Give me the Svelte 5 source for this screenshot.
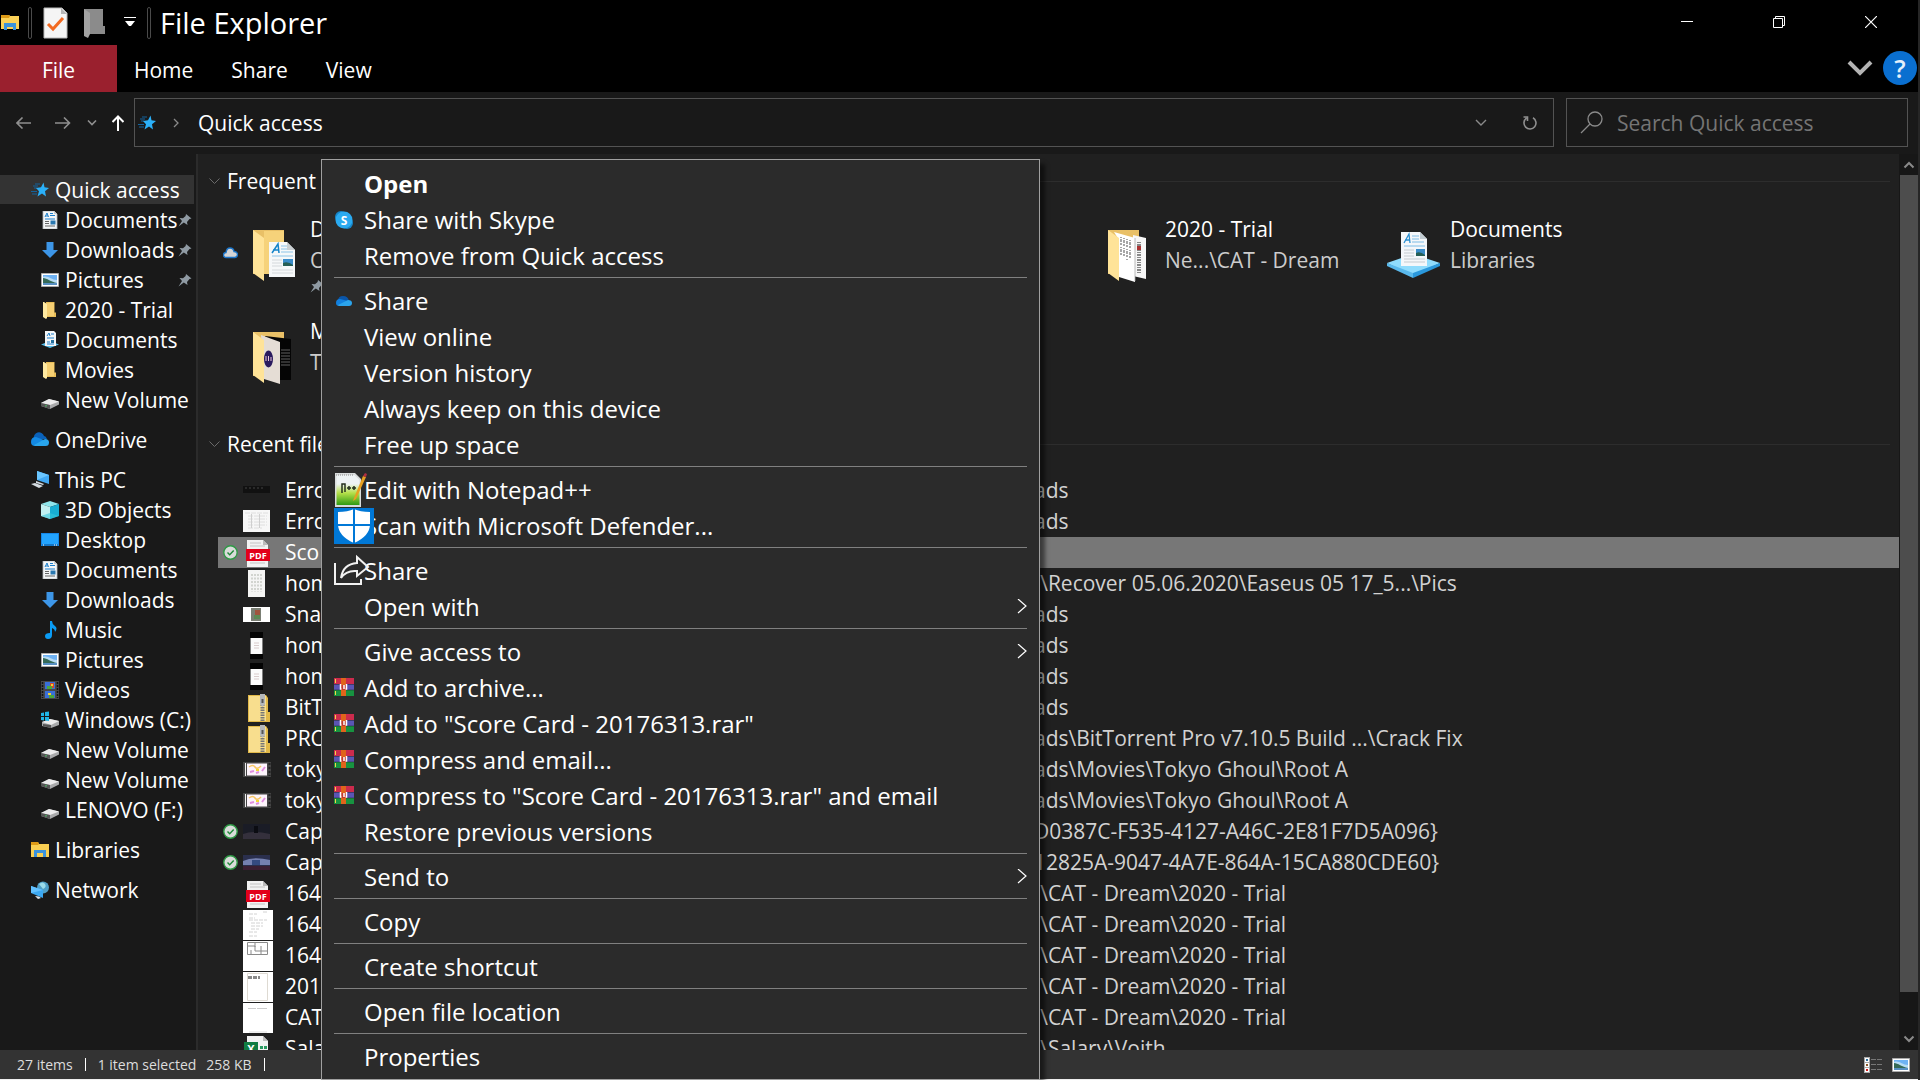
<script>
  const navGroups = [
    [
      { label: 'Quick access', icon: 'star', root: true, active: true },
      { label: 'Documents', icon: 'doc', pinned: true },
      { label: 'Downloads', icon: 'down', pinned: true },
      { label: 'Pictures', icon: 'pic', pinned: true },
      { label: '2020 - Trial', icon: 'folder' },
      { label: 'Documents', icon: 'libdoc' },
      { label: 'Movies', icon: 'folder' },
      { label: 'New Volume', icon: 'drive' }
    ],
    [{ label: 'OneDrive', icon: 'onedrive', root: true }],
    [
      { label: 'This PC', icon: 'pc', root: true },
      { label: '3D Objects', icon: 'cube' },
      { label: 'Desktop', icon: 'desktop' },
      { label: 'Documents', icon: 'doc' },
      { label: 'Downloads', icon: 'down' },
      { label: 'Music', icon: 'music' },
      { label: 'Pictures', icon: 'pic' },
      { label: 'Videos', icon: 'video' },
      { label: 'Windows (C:)', icon: 'windrive' },
      { label: 'New Volume', icon: 'drive' },
      { label: 'New Volume', icon: 'drive' },
      { label: 'LENOVO (F:)', icon: 'drive' }
    ],
    [{ label: 'Libraries', icon: 'libraries', root: true }],
    [{ label: 'Network', icon: 'network', root: true }]
  ];

  const tiles = [
    { name: 'D', place: 'O', art: 'docs', cloud: true, pinned: true },
    { name: '2020 - Trial', place: 'Ne...\\CAT - Dream', art: 'trial', fourth: true },
    { name: 'Documents', place: 'Libraries', art: 'library' },
    { name: 'M', place: 'T', art: 'movies' }
  ];

  const trial = ')\\CAT - Dream\\2020 - Trial';
  const files = [
    { name: 'Erro', path: 'ads', thumb: 'strip' },
    { name: 'Erro', path: 'ads', thumb: 'sheet' },
    { name: 'Sco', path: '', thumb: 'pdf', synced: true, selected: true },
    { name: 'hom', path: ')\\Recover 05.06.2020\\Easeus 05 17_5...\\Pics', thumb: 'page' },
    { name: 'Sna', path: 'ads', thumb: 'snap' },
    { name: 'hom', path: 'ads', thumb: 'phone' },
    { name: 'hom', path: 'ads', thumb: 'phone' },
    { name: 'BitT', path: 'ads', thumb: 'zip' },
    { name: 'PRO', path: 'ads\\BitTorrent Pro v7.10.5 Build ...\\Crack Fix', thumb: 'zip' },
    { name: 'toky', path: 'ads\\Movies\\Tokyo Ghoul\\Root A', thumb: 'film' },
    { name: 'toky', path: 'ads\\Movies\\Tokyo Ghoul\\Root A', thumb: 'film' },
    { name: 'Cap', path: 'D0387C-F535-4127-A46C-2E81F7D5A096}', thumb: 'dark', synced: true },
    { name: 'Cap', path: '12825A-9047-4A7E-864A-15CA880CDE60}', thumb: 'night', synced: true },
    { name: '164', path: trial, thumb: 'pdf' },
    { name: '164', path: trial, thumb: 'text' },
    { name: '164', path: trial, thumb: 'plan' },
    { name: '201', path: trial, thumb: 'form' },
    { name: 'CAT', path: trial, thumb: 'blank' },
    { name: 'Sala', path: ')\\Salary\\Voith', thumb: 'excel' }
  ];

  const menuGroups = [
    [{ label: 'Open', bold: true }, { label: 'Share with Skype', icon: 'skype' }, { label: 'Remove from Quick access' }],
    [
      { label: 'Share', icon: 'cloud' },
      { label: 'View online' },
      { label: 'Version history' },
      { label: 'Always keep on this device' },
      { label: 'Free up space' }
    ],
    [{ label: 'Edit with Notepad++', icon: 'notepad' }, { label: 'Scan with Microsoft Defender...', icon: 'defender' }],
    [{ label: 'Share', icon: 'share' }, { label: 'Open with', sub: true }],
    [
      { label: 'Give access to', sub: true },
      { label: 'Add to archive...', icon: 'rar' },
      { label: 'Add to "Score Card - 20176313.rar"', icon: 'rar' },
      { label: 'Compress and email...', icon: 'rar' },
      { label: 'Compress to "Score Card - 20176313.rar" and email', icon: 'rar' },
      { label: 'Restore previous versions' }
    ],
    [{ label: 'Send to', sub: true }],
    [{ label: 'Copy' }],
    [{ label: 'Create shortcut' }],
    [{ label: 'Open file location' }],
    [{ label: 'Properties' }]
  ];
</script>

{#snippet navIcon(name)}
  <svg class="nav-icon" viewBox="0 0 18 18" aria-hidden="true">
    {#if name === 'star'}
      <path d="M4 3h5M2 5h5M3 7h3M0 10.500h6M1 13h5" stroke="#14639c" stroke-width="1" />
      <path d="M12.500 1.500 13.500 6.300 18 7 14 10.200 15 15.500 11 12.500 6.500 15.500 8 10.200 5 7 10 6.300z" fill="#2bb0f8" />
    {:else if name === 'doc'}
      <path d="M2 0h11l3 3v15H2z" fill="#f4f6f7" stroke="#b6babd" stroke-width=".8" />
      <path d="M13 0v3h3" fill="#c8ccce" />
      <path d="M4 6l2-4 1.500 4M4.600 5h2.500M9 2.500h3M9 4.500h5M4 8h10" stroke="#1c7fcc" fill="none" />
      <path d="M4 10.500h4M4 12.500h4M4 15h10" stroke="#666" />
      <path d="M9.500 9.500h5v4h-5z" fill="#2a78b0" />
    {:else if name === 'down'}
      <path d="M5.500 1h7v8H17l-8 8-8-8h4.500z" fill="#3d96e8" />
    {:else if name === 'pic'}
      <path d="M.5 2.500h17v13H.5z" fill="#fff" stroke="#aaa" />
      <path d="M2 4h14v10H2z" fill="#6eb2f4" />
      <path d="M2 6c5-2 8 3 14 3v3H2z" fill="#b7dcf5" />
      <path d="M2 7c4 0 8 4 14 5H2z" fill="#356a58" />
      <path d="M2 12h14v2H2z" fill="#578fc2" />
    {:else if name === 'folder'}
      <path d="M5 1h8.500v10.500H15V16H5z" fill="#e8bd58" />
      <path d="M2 1h1l3 2v14l-1 1-3-2z" fill="#ffe9a0" />
      <path d="M6 2h7v13H6z" fill="#f5cf73" />
    {:else if name === 'libdoc'}
      <path d="M0 13.500 9 10l9 3.500L9 17z" fill="#57bdea" />
      <path d="M4 0h9l2 2v13H4z" fill="#f4f6f7" />
      <path d="M6 5l2-3 1 3M10 3h3M6 7h7M6 11h3M6 13h7" stroke="#1c7fcc" fill="none" />
      <path d="M10 9h3v3h-3z" fill="#24709f" />
    {:else if name === 'drive'}
      <path d="M0 12 8 8l10 2.500v3L9 18 0 15z" fill="#a9aaab" />
      <path d="M0 12 8 8l10 2.500L9 14z" fill="#ececec" />
      <path d="M0 12l9 2v4l-9-3z" fill="#555" />
      <path d="M4.500 14.500l1 .5" stroke="#4ad36a" stroke-width="1.500" />
    {:else if name === 'onedrive'}
      <path d="M3 8a5 5 0 0 1 10-3q2 0 3 3z" fill="#0a62ba" />
      <path d="M0 11q0-5 5-5l8 3-6 6H4q-4 0-4-4z" fill="#1389e4" />
      <path d="M3 14 14 8q4 0 4 3.500T14.500 15H4z" fill="#29a5ec" />
    {:else if name === 'pc'}
      <path d="M6 0 18 4v9L6 9z" fill="#41a9f4" />
      <path d="M6 0 18 4 6 9z" fill="#6ac6ff" />
      <path d="M5 10l8 3-1 1-7-2zM0 13l4-1 8 3-4 2z" fill="#d4dbe1" />
    {:else if name === 'cube'}
      <path d="M0 3 9 0l9 3-9 3z" fill="#8ee6ec" />
      <path d="M0 3l9 3v12l-9-3z" fill="#c1f0f2" />
      <path d="M18 3 9 6v12l9-3z" fill="#18aed2" />
      <path d="M0 15l9-3 9 3-9 3z" fill="#35c6da" opacity=".6" />
    {:else if name === 'desktop'}
      <path d="M0 2h18v13H0z" fill="#1487e8" />
      <path d="M1 3h16v10H1z" fill="#23a4ff" />
      <path d="M1 14h16" stroke="#1466a8" />
      <path d="M2 14h1M13 14h1M15 14h1" stroke="#fff" />
    {:else if name === 'music'}
      <path d="M9 0h2q0 3 3 5t0 6q0-3-3-4v7q0 4-4 4-3 0-3-3t5-3z" fill="#0a9cf5" />
    {:else if name === 'video'}
      <path d="M0 0h18v18H0z" fill="#47484a" />
      <path d="M4 1h10v7H4zM4 10h10v7H4z" fill="#3a6fd8" />
      <path d="M9 2h4v5H9z" fill="#d24a2c" />
      <path d="M6 5h5v3H6zM8 14h5v3H8z" fill="#49a83c" />
      <path d="M10 3h2v2h-2zM7 12h3v2H7z" fill="#f2cf35" />
      <path d="M1.500 1v16M16.500 1v16" stroke="#111" stroke-width="1.500" stroke-dasharray="2 1" />
    {:else if name === 'windrive'}
      <path d="M1 11l8-3 9 2v4l-8 3-9-2z" fill="#a9aaab" />
      <path d="M1 11l8-3 9 2-8 4z" fill="#ececec" />
      <path d="M2 13l8 1v3l-8-2z" fill="#555" />
      <path d="M0 2l3-.5V5H0zM4 1l4-.5V5H4zM0 6h3v3.500L0 9zM4 6h4v4l-4-.5z" fill="#1fb6e8" />
    {:else if name === 'libraries'}
      <path d="M0 1h7l1 2h10v13H0z" fill="#f9cf52" />
      <path d="M0 1h7l1 2-1 1H0z" fill="#dd9a16" />
      <path d="M3 9h12v7h-3v-4H6v4H3z" fill="#3b93dc" />
    {:else}
      <circle cx="12" cy="6.500" r="6" fill="#4f9fc6" />
      <path d="M8 3q4-3 6 0t-2 5M15 8l2-2" fill="#9bdcea" />
      <path d="M0 5l12 4v8L0 12z" fill="#3ba8f2" />
      <path d="M0 5l12 4-12 3z" fill="#63c1ff" />
      <path d="M4 15l4 .5 2 1.500-3 1z" fill="#d9e2e8" />
    {/if}
  </svg>
{/snippet}

{#snippet pin()}
  <svg class="pin" viewBox="0 0 14 14" aria-hidden="true">
    <path d="M8 1l5.500 4.500-2 .5L9 9l.5 3L5.800 9.500.5 13.500 4 8 1.500 5l3.500.3L7.600 3z" fill="#8f9aa3" />
  </svg>
{/snippet}

{#snippet tileArt(art)}
  <svg class="tile-art" viewBox="0 0 54 54" aria-hidden="true">
    {#if art === 'library'}
      <path d="M0 35 26 26l27 9-27 13z" fill="#8fdcfd" />
      <path d="M0 35l26 10v5L0 38z" fill="#5ab9ec" />
      <path d="M53 35 26 45v5l27-12z" fill="#2a98dc" />
      <path d="M14 4h19l7 7v27H14z" fill="#f4f7fa" />
      <path d="M33 4v7h7z" fill="#c3cdd3" />
      <path d="M17 15l5-9 1 9M18 12h5" stroke="#2a8fd0" fill="none" stroke-width="1.300" />
      <path d="M25 8h7M25 11h7M25 14h12M17 18h21" stroke="#7cbce6" />
      <path d="M17 22h10M17 25h10M17 28h10M17 31h21M17 34h21" stroke="#c5cbd0" />
      <path d="M29 21h9v7h-9z" fill="#3a8cc9" />
      <path d="M29 25q4-2 9 2v1h-9z" fill="#275f55" />
    {:else}
      <path d="M6 2h31v44H6z" fill="#e9c067" />
      {#if art === 'docs'}
        <path d="M17 3h20v43H17z" fill="#f6d27a" />
        <path d="M22 14h18l8 8v27H22z" fill="#f6f8f9" />
        <path d="M40 14v8h8z" fill="#c9cfd2" />
        <path d="M25 25l6-9 1 9M26 22h6" stroke="#1684c9" fill="none" stroke-width="1.500" />
        <path d="M34 18h6M34 21h6M34 24h12M25 28h21" stroke="#8cc4e8" />
        <path d="M25 32h10M25 35h10M25 38h10M25 42h21M25 45h21" stroke="#d4d8db" />
        <path d="M36 31h10v7H36z" fill="#3a8cc9" />
        <path d="M36 35q5-2 10 2v1H36z" fill="#275f55" />
      {:else if art === 'trial'}
        <path d="M31 7l13 3v41l-13-3z" fill="#f7f7f7" />
        <path d="M37 14v32" stroke="#888" stroke-width="4" stroke-dasharray="1 1 2 1" />
        <path d="M35 18h4v4h-4z" fill="#a33" />
        <path d="M12 4l21 6v44l-16-5V12z" fill="#fff" />
        <path d="M19 9v20M22 10v20M25 11v21M28 12v19" stroke="#8a8a8a" stroke-width="1.500" stroke-dasharray="1 1 3 1 2 2" />
        <path d="M33 10v43" stroke="#aaa" stroke-width=".8" />
      {:else}
        <path d="M18 6l26 3v41H30z" fill="#050505" />
        <path d="M34 20h9M34 23h9M34 26h9M34 29h9M34 32h9M34 35h9" stroke="#777" stroke-width=".8" />
        <path d="M14 5l19 7v42l-16-5z" fill="#e5ddd5" />
        <ellipse cx="21.500" cy="29" rx="4.500" ry="8.500" fill="#2a1a5e" />
        <path d="M19 26v5M21.500 26v5M24 27v4" stroke="#e8c4d8" />
      {/if}
      <path d="M6 2l11 8v43L6 45z" fill="#ffe398" />
    {/if}
  </svg>
{/snippet}

{#snippet thumb(name)}
  <svg class="thumb" viewBox="0 0 30 30" aria-hidden="true">
    {#if name === 'strip'}
      <path d="M0 10h27v7H0z" fill="#111" />
      <path d="M2 12h20" stroke="#444" stroke-dasharray="2 2" />
    {:else if name === 'sheet'}
      <path d="M0 3h27v22H0z" fill="#f7f7f7" />
      <path d="M2 6h23M5 9h19M5 12h19M5 15h19M5 18h19M5 21h14" stroke="#dedede" stroke-dasharray="5 1" />
      <path d="M8.500 7v14M16.500 7v14" stroke="#cfcfcf" />
    {:else if name === 'pdf'}
      <path d="M4 2h16l5 5v22H4z" fill="#f2f2f2" />
      <path d="M20 2v5h5z" fill="#bbb" />
      <path d="M7 5h11M7 8h15M7 25h15" stroke="#c4c4c4" />
      <path d="M3 11h24v12H3z" fill="#e2001a" />
      <text x="15" y="20.500" text-anchor="middle" font-size="9" font-weight="700" fill="#fff">PDF</text>
    {:else if name === 'page'}
      <path d="M5 1h17v27H5z" fill="#f5f5f4" />
      <path d="M9 5v18M12 5v18M15 5v18M18 5v18" stroke="#d2d4cf" stroke-width="2" stroke-dasharray="2 1.500" />
    {:else if name === 'snap'}
      <path d="M0 7h27v15H0z" fill="#fff" />
      <path d="M8 8h10v13H8z" fill="#7b7f74" />
      <path d="M12 10h5v5h-5z" fill="#a0543e" />
      <path d="M11 15h6v4h-6z" fill="#5d8a55" />
    {:else if name === 'phone'}
      <path d="M7 1h13v27H7z" fill="#040404" />
      <path d="M7.500 7h12v16h-12z" fill="#fbfbfb" />
      <path d="M11 12h5M11 14.500h5M11 17h5" stroke="#d9cccc" />
    {:else if name === 'zip'}
      <path d="M5 2h18l2 3v14h2v10H5z" fill="#e2b949" />
      <path d="M6 3h17v25H6z" fill="#f8de8e" />
      <path d="M19.500 9v20" stroke="#777" stroke-width="4" stroke-dasharray="1.500 1" />
      <path d="M17 1h5v10l-2.500 3L17 11z" fill="#b5b8bb" />
      <path d="M18.500 6h2v4h-2z" fill="#555" />
    {:else if name === 'film'}
      <path d="M0 7h28v15H0z" fill="#444" />
      <path d="M2.500 8v13" stroke="#eee" />
      <path d="M26.500 8v13" stroke="#222" stroke-width="2" stroke-dasharray="2 2" />
      <path d="M4 8.500h20v12H4z" fill="#fdf4fb" />
      <path d="M6 12q4-3 6 0t6-1" stroke="#f7c765" stroke-width="1.500" fill="none" />
      <path d="M7 17l4-1M13 18l3-1M19 16l3-4" stroke="#e08fe0" stroke-width="2" fill="none" />
      <path d="M13 14h3v2h-3z" fill="#f5d832" />
    {:else if name === 'dark'}
      <path d="M0 7h27v15H0z" fill="#1a1c26" />
      <path d="M0 17q10-4 27 0v5H0z" fill="#34303c" />
      <path d="M11 9h4v7h-4z" fill="#0b0c12" />
    {:else if name === 'night'}
      <path d="M0 7h27v15H0z" fill="#2a2f4d" />
      <path d="M0 13q10-5 27-1v5H0z" fill="#7480b0" />
      <path d="M9 12h8v5H9z" fill="#344a80" />
      <path d="M0 18h27v4H0z" fill="#3b1f33" />
    {:else if name === 'excel'}
      <path d="M4 2h16l5 5v22H4z" fill="#f2f2f2" />
      <path d="M20 2v5h5z" fill="#bbb" />
      <path d="M17 12h3v3h-3zM21 12h3v3h-3zM17 17h3v3h-3zM21 17h3v3h-3z" fill="#2a9a61" />
      <path d="M1 8h14v14H1z" fill="#107c41" />
      <text x="8" y="19" text-anchor="middle" font-size="11" font-weight="700" fill="#fff">X</text>
    {:else}
      <path d="M0 0h30v30H0z" fill="#fff" />
      {#if name === 'text'}
        <path d="M6 4h8M20 2h4M6 8h6M6 10h18M8 13h12M8 16h12M8 19h8M6 22h8M6 26h8" stroke="#d2d2d2" stroke-dasharray="4 1" />
      {:else if name === 'plan'}
        <path d="M4.500 1.500h20v12h-20zM4 5h8v5h12M12 1v5M18 5v8M8 9v4" fill="none" stroke="#8a8a8a" />
      {:else if name === 'form'}
        <path d="M4.500 1.500h20v27h-20z" fill="none" stroke="#dedad2" />
        <path d="M5 5.500h12" stroke="#888" stroke-width="3" stroke-dasharray="4 1" />
      {:else}
        <path d="M5 5.500h8M14 5.500h10" stroke="#ccc" />
        <path d="M6 29h18" stroke="#ddd" />
      {/if}
    {/if}
  </svg>
{/snippet}

{#snippet menuIcon(name)}
  {#if name === 'skype'}
    <svg width="20" height="20" viewBox="0 0 20 20" aria-hidden="true">
      <circle cx="7" cy="7" r="6" fill="#1686c9" />
      <circle cx="13" cy="13" r="6" fill="#1686c9" />
      <circle cx="10" cy="10" r="8.500" fill="#2aaaf0" />
      <text x="10" y="14.500" text-anchor="middle" font-size="12" font-weight="700" fill="#fff">S</text>
    </svg>
  {:else if name === 'cloud'}
    <svg width="20" height="20" viewBox="0 0 20 20" aria-hidden="true">
      <path d="M4 10q0-5 5-5t6 5z" fill="#0a55a8" />
      <path d="M2 12q0-4 4-4l8 2-6 5H5q-3 0-3-3z" fill="#1280de" />
      <path d="M4 14 14 9q4 0 4 3t-3 3H5z" fill="#2ba4ec" />
    </svg>
  {:else if name === 'notepad'}
    <svg width="34" height="34" viewBox="0 0 34 34" aria-hidden="true">
      <defs>
        <linearGradient id="npp" x1="0" y1="0" x2="0" y2="1">
          <stop offset=".3" stop-color="#eef3f4" />
          <stop offset=".6" stop-color="#b5e04a" />
          <stop offset="1" stop-color="#2f9a12" />
        </linearGradient>
      </defs>
      <path d="M1 0h20l6 6v28H1z" fill="#d9dcdc" />
      <path d="M2.500 2h18l5 5v25h-23z" fill="url(#npp)" />
      <path d="M2 2h18" stroke="#888" stroke-dasharray="1 1" />
      <path d="M8 20v-9h3v8M13 15h4M15 13v4M18 15h4M20 13v4" stroke="#24301e" fill="none" stroke-width="1.500" />
      <path d="M29 3 20 25l-1 3 3-2L32 4z" fill="#e7a022" />
      <path d="M29 3l2-3 2 1-1 3z" fill="#b23040" />
    </svg>
  {:else if name === 'defender'}
    <svg width="40" height="36" viewBox="0 0 40 36" aria-hidden="true">
      <path d="M0 0h40v36H0z" fill="#0078d7" />
      <path d="M20 1q6 3 16 3v12q0 12-16 19Q4 28 4 16V4q10 0 16-3z" fill="#fff" />
      <path d="M20 0v36M3 17h34" stroke="#0078d7" stroke-width="2" />
    </svg>
  {:else if name === 'share'}
    <svg width="36" height="34" viewBox="0 0 36 34" aria-hidden="true">
      <path d="M1 9v21h26v-5" fill="none" stroke="#f2f2f2" stroke-width="2" />
      <path d="M23 3l11 10-11 9v-5q-11-1-16 7 2-14 16-15z" fill="none" stroke="#f2f2f2" stroke-width="2" />
    </svg>
  {:else if name === 'rar'}
    <svg width="20" height="20" viewBox="0 0 20 20" aria-hidden="true">
      <path d="M0 0h20v6H0z" fill="#cc2b4d" />
      <path d="M0 6h20v6H0z" fill="#5a55b4" />
      <path d="M0 12h20v6H0z" fill="#179340" />
      <path d="M0 6.500h20M0 12h20" stroke="#222" stroke-width=".8" opacity=".6" />
      <path d="M7 0h5v18H7z" fill="#e0641b" />
      <path d="M1.500 1v4M1.500 13v4" stroke="#f2d54a" />
      <path d="M6 7h7v5H6z" fill="#c23a2d" />
      <path d="M6.500 6v5h1M12.500 6v5h-1M10 7v4" stroke="#fff" stroke-width="1.500" fill="none" />
    </svg>
  {/if}
{/snippet}

<div class="window">
  <header class="titlebar">
    <svg class="app-icon" viewBox="0 0 20 20" aria-hidden="true">
      <path d="M1 2h8l1 1h9v13H1z" fill="#fbd258" />
      <path d="M1 2h8l1 1-1 2H1z" fill="#dd9a16" />
      <path d="M4 10h12v7h-3v-3H7v3H4z" fill="#3b93dc" />
    </svg>
    <span class="bar"></span>
    <button class="quick props" aria-label="Properties">
      <svg width="26" height="32" viewBox="0 0 26 32">
        <path d="M1 1h18l5 5v25H1z" fill="#f5f5f5" stroke="#b9b9b9" />
        <path d="M18 1v6h6z" fill="#b5b5b5" />
        <path d="M5 17l5 5L20 11" fill="none" stroke="#f26a21" stroke-width="3" />
      </svg>
    </button>
    <button class="quick new" aria-label="New folder">
      <svg width="22" height="30" viewBox="0 0 22 30">
        <path d="M1 1h19v17h2v8H6z" fill="#8b8b8b" />
        <path d="M1 1l6 4v21l-2 4-4-2z" fill="#a3a3a3" />
      </svg>
    </button>
    <button class="quick more" aria-label="Customize toolbar">
      <svg width="12" height="11" viewBox="0 0 12 11">
        <path d="M0 .5h12" stroke="#fff" />
        <path d="M1 4h10L7 9H5z" fill="#fff" />
      </svg>
    </button>
    <span class="bar"></span>
    <h1>File Explorer</h1>
    <div class="controls">
      <button aria-label="Minimize"><svg width="12" height="12"><path d="M0 5.500h12" stroke="#fff" /></svg></button>
      <button aria-label="Restore">
        <svg width="12" height="12"><path d="M.5 2.500h9v9h-9zM2.500 2.500v-2h9v9h-2" fill="none" stroke="#fff" /></svg>
      </button>
      <button aria-label="Close"><svg width="12" height="12"><path d="M0 0l12 12M12 0 0 12" stroke="#fff" stroke-width="1.200" /></svg></button>
    </div>
  </header>

  <div class="ribbon">
    <button class="file">File</button>
    <button class="tab">Home</button>
    <button class="tab">Share</button>
    <button class="tab">View</button>
    <div class="ribbon-end">
      <button aria-label="Expand ribbon">
        <svg width="26" height="18" viewBox="0 0 26 18"><path d="M2 3l11 11L24 3" fill="none" stroke="#b4b4b4" stroke-width="4" /></svg>
      </button>
      <button class="help" aria-label="Help">?</button>
    </div>
  </div>

  <div class="toolbar">
    <div class="history">
      <button aria-label="Back"><svg width="16" height="12"><path d="M15 6H1M6.500.5 1 6l5.500 5.500" fill="none" stroke="#8f8f8f" stroke-width="1.600" /></svg></button>
      <button class="forward" aria-label="Forward"><svg width="16" height="12"><path d="M0 6h14M9 .5 14.500 6 9 11.500" fill="none" stroke="#8f8f8f" stroke-width="1.600" /></svg></button>
      <button class="recent" aria-label="Recent locations"><svg width="10" height="6"><path d="M1 .5l4 4 4-4" fill="none" stroke="#8f8f8f" stroke-width="1.600" /></svg></button>
      <button class="up" aria-label="Up"><svg width="12" height="16"><path d="M6 16V1.500M.5 7 6 1.500 11.500 7" fill="none" stroke="#fff" stroke-width="2" /></svg></button>
    </div>
    <div class="address">
      {@render navIcon('star')}
      <svg class="crumb-arrow" width="6" height="10"><path d="M1 1l4 4-4 4" fill="none" stroke="#8a8a8a" stroke-width="1.300" /></svg>
      <button class="crumb">Quick access</button>
      <button class="drop" aria-label="Previous locations"><svg width="12" height="8"><path d="M1 1l5 5 5-5" fill="none" stroke="#8a8a8a" stroke-width="1.400" /></svg></button>
      <button class="refresh" aria-label="Refresh">
        <svg width="16" height="16" viewBox="0 0 16 16"><path d="M11 2.800a6 6 0 1 1-6.500.3M1.500 2h4v4" fill="none" stroke="#8f8f8f" stroke-width="1.600" /></svg>
      </button>
    </div>
    <label class="search">
      <svg width="24" height="24" viewBox="0 0 24 24" aria-hidden="true">
        <circle cx="15" cy="8" r="7" fill="none" stroke="#8a8a8a" stroke-width="1.300" />
        <path d="M10 13 1 22" stroke="#8a8a8a" stroke-width="1.300" />
      </svg>
      <input type="search" placeholder="Search Quick access" aria-label="Search Quick access" />
    </label>
  </div>

  <div class="body">
    <nav class="tree" aria-label="Folders">
      {#each navGroups as group}
        <ul>
          {#each group as item}
            <li>
              <a href="#{item.icon}" class:root={item.root} class:active={item.active}>
                {@render navIcon(item.icon)}
                <span>{item.label}</span>
                {#if item.pinned}{@render pin()}{/if}
              </a>
            </li>
          {/each}
        </ul>
      {/each}
    </nav>

    <main>
      <h2>
        <svg width="11" height="7"><path d="M.5.5l5 5 5-5" fill="none" stroke="#6b6b6b" /></svg>
        <span>Frequent f</span>
        <i></i>
      </h2>
      <div class="tiles">
        {#each tiles as tile}
          <a href="#tile" class="tile" class:fourth={tile.fourth}>
            <span class="state">
              {#if tile.cloud}
                <svg width="15" height="12" viewBox="0 0 15 12" aria-label="Available online">
                  <path d="M4 10.500H3A2.500 2.500 0 0 1 3 5.500Q3.500 1 7 1t4 3.500q3.500.3 3.500 3T12 10.500z" fill="#d5d5d5" stroke="#1b74c8" stroke-width="1.400" />
                </svg>
              {/if}
            </span>
            {@render tileArt(tile.art)}
            <span class="tile-text">
              <span>{tile.name}</span>
              <span class="place">{tile.place}</span>
              {#if tile.pinned}{@render pin()}{/if}
            </span>
          </a>
        {/each}
      </div>
      <h2 class="second">
        <svg width="11" height="7"><path d="M.5.5l5 5 5-5" fill="none" stroke="#6b6b6b" /></svg>
        <span>Recent file</span>
        <i></i>
      </h2>
      <table>
        <tbody>
          {#each files as file}
            <tr class:selected={file.selected}>
              <td class="marks">
                <div>
                  <span class="sync">
                    {#if file.synced}
                      <svg width="15" height="15" viewBox="0 0 15 15" aria-label="Available on this device">
                        <circle cx="7.500" cy="7.500" r="6.700" fill="#d9dcda" stroke="#2f9a46" stroke-width="1.400" />
                        <path d="M4.500 7.500l2.200 2.300L10.700 5.500" fill="none" stroke="#1f8a3a" stroke-width="1.400" />
                      </svg>
                    {/if}
                  </span>
                  {@render thumb(file.thumb)}
                </div>
              </td>
              <td class="name">{file.name}</td>
              <td class="path">{file.path}</td>
            </tr>
          {/each}
        </tbody>
      </table>
    </main>

    <div class="scroll" aria-hidden="true">
      <svg width="12" height="8"><path d="M1.500 6.500 6 2l4.500 4.500" fill="none" stroke="#8a8a8a" stroke-width="2" /></svg>
      <span class="thumb-bar"></span>
      <span class="track"></span>
      <svg width="12" height="8"><path d="M1.500 1.500 6 6l4.500-4.500" fill="none" stroke="#8a8a8a" stroke-width="2" /></svg>
    </div>
  </div>

  <footer>
    <span>27 items</span>
    <b></b>
    <span>1 item selected</span>
    <span class="size">258 KB</span>
    <b></b>
    <div class="views">
      <button aria-label="Details view">
        <svg width="18" height="16" viewBox="0 0 18 16">
          <path d="M0 0h6v16H0z" fill="#aaa" />
          <path d="M1 1h4v4H1zM1 6h4v4H1zM1 11h4v4H1z" fill="#fff" />
          <path d="M2 2h2v2H2z" fill="#2d6f9d" /><path d="M2 7h2v2H2z" fill="#8a5a2a" /><path d="M2 12h2v2H2z" fill="#d01818" />
          <path d="M7 2.500h5M13 2.500h5M7 7.500h5M13 7.500h5M7 12.500h5M13 12.500h5" stroke="#777" />
        </svg>
      </button>
      <button aria-label="Large icons view">{@render navIcon('pic')}</button>
    </div>
  </footer>

  <div class="menu" role="menu">
    {#each menuGroups as group}
      <div class="menu-group" role="group">
        {#each group as item}
          <button role="menuitem" class:bold={item.bold}>
            <span class="menu-label">{item.label}</span>
            <span class="menu-icon">{@render menuIcon(item.icon)}</span>
            {#if item.sub}
              <svg class="sub" width="10" height="16"><path d="M1 0l8 7-8 7" fill="none" stroke="#fff" stroke-width="1.200" /></svg>
            {/if}
          </button>
        {/each}
      </div>
    {/each}
  </div>
</div>

<style>
  :global(body) {
    background: #202020;
  }
  .window {
    position: relative;
    display: flex;
    flex-direction: column;
    height: 100vh;
    box-sizing: border-box;
    border-right: 2px solid #262626;
    overflow: hidden;
    background: #191919;
    color: #fff;
    font-family: 'Open Sans', 'Noto Sans', sans-serif;
    font-size: 21px;
    line-height: 30px;
  }
  button {
    margin: 0;
    padding: 0;
    border: 0;
    background: none;
    color: inherit;
    font: inherit;
  }
  svg {
    display: block;
    flex: none;
  }
  a {
    color: inherit;
    text-decoration: none;
  }

  .titlebar {
    display: flex;
    align-items: center;
    flex: none;
    height: 45px;
    background: #000;
  }
  .app-icon {
    width: 20px;
    height: 20px;
  }
  .bar {
    flex: none;
    width: 2px;
    height: 30px;
    margin-left: 8px;
    border: 1px solid #4a4a4a;
    border-radius: 2px;
  }
  .props {
    margin-left: 11px;
  }
  .new {
    margin-left: 14px;
  }
  .more {
    margin: 0 3px 0 19px;
  }
  h1 {
    margin: 0 0 0 9px;
    font-size: 29px;
    font-weight: 400;
    line-height: 36px;
    white-space: nowrap;
  }
  .controls {
    display: flex;
    align-self: stretch;
    margin-left: auto;
    padding: 0 1px 2px 0;
  }
  .controls button {
    display: grid;
    place-items: center;
    width: 92px;
  }

  .ribbon {
    display: flex;
    flex: none;
    height: 47px;
    background: #000;
  }
  .file {
    width: 117px;
    background: #9a202e;
  }
  .file,
  .tab {
    padding-top: 2px;
  }
  .tab {
    padding-left: 17px;
    padding-right: 18px;
  }
  .tab + .tab {
    padding-left: 20px;
  }
  .ribbon-end {
    display: flex;
    align-items: center;
    gap: 10px;
    margin-left: auto;
    padding: 0 1px 2px 0;
  }
  .help {
    width: 34px;
    height: 34px;
    border-radius: 50%;
    background: #0a6fd0;
    color: #e4effa;
    font-size: 25px;
    font-weight: 600;
    line-height: 34px;
  }

  .toolbar {
    display: flex;
    flex: none;
    padding: 6px 10px 7px 0;
  }
  .history {
    display: flex;
    align-items: center;
    width: 134px;
    padding-left: 16px;
    box-sizing: border-box;
  }
  .forward {
    margin-left: 23px;
  }
  .recent {
    margin-left: 16px;
  }
  .up {
    margin-left: 15px;
  }
  .address,
  .search {
    display: flex;
    align-items: center;
    box-sizing: border-box;
    height: 49px;
    border: 1px solid #535353;
  }
  .address {
    flex: 1;
    padding: 0 15px 0 3px;
  }
  .crumb-arrow {
    margin: 0 19px 0 17px;
  }
  .drop {
    margin-left: auto;
  }
  .refresh {
    margin-left: 35px;
  }
  .search {
    width: 342px;
    margin-left: 12px;
    padding-left: 13px;
  }
  input {
    flex: 1;
    min-width: 0;
    margin: 0;
    padding: 0 0 0 13px;
    border: 0;
    outline: 0;
    background: none;
    color: #fff;
    font: inherit;
  }
  input::placeholder {
    color: #757575;
    opacity: 1;
  }

  .body {
    display: flex;
    flex: 1;
    min-height: 0;
  }
  .tree {
    flex: none;
    width: 196px;
    padding-top: 21px;
    border-right: 2px solid #2b2b2b;
    overflow: hidden;
    white-space: nowrap;
  }
  ul {
    margin: 0 0 10px;
    padding: 0;
    list-style: none;
  }
  .tree a {
    display: flex;
    align-items: center;
    box-sizing: border-box;
    height: 30px;
    margin-right: 2px;
    padding-left: 41px;
    border-bottom: 1px solid transparent;
    background-clip: padding-box;
  }
  .tree a span {
    margin-left: 6px;
  }
  .tree a.root {
    padding-left: 31px;
  }
  .tree a.active {
    background-color: #333;
  }
  .nav-icon {
    width: 18px;
    height: 18px;
  }
  .pin {
    width: 14px;
    height: 14px;
  }
  .tree .pin {
    margin-left: auto;
    margin-right: 2px;
  }

  main {
    flex: 1;
    min-width: 0;
    overflow: hidden;
    padding-top: 12px;
    background: #202020;
    white-space: nowrap;
  }
  h2 {
    display: flex;
    align-items: center;
    gap: 7px;
    margin: 0 9px 0 0;
    padding-left: 11px;
    font-size: 21px;
    font-weight: 400;
  }
  h2 i {
    flex: 1;
    height: 1px;
    background: #2d2d2d;
  }
  .second {
    margin-top: 11px;
  }
  .tiles {
    display: grid;
    grid-template-columns: repeat(5, 285px);
    grid-auto-rows: 102px;
    padding: 18px 0 0 20px;
  }
  .fourth {
    grid-column: 4;
  }
  .tile {
    display: flex;
    align-items: flex-start;
    line-height: 31px;
  }
  .state {
    width: 24px;
    padding: 33px 0 0 5px;
  }
  .tile-art {
    width: 54px;
    height: 54px;
    margin: 14px 9px 0 0;
  }
  .tile-text {
    display: flex;
    flex-direction: column;
  }
  .place {
    color: #ccc;
  }
  .tile .pin {
    margin-top: 3px;
  }

  table {
    width: calc(100% - 20px);
    margin: 16px 0 0 20px;
    border-collapse: collapse;
    table-layout: fixed;
  }
  td {
    height: 31px;
    padding: 0;
    line-height: 31px;
  }
  .marks {
    width: 67px;
  }
  .marks div {
    display: flex;
    align-items: center;
    height: 31px;
    padding-left: 5px;
  }
  .sync {
    width: 20px;
  }
  .thumb {
    width: 30px;
    height: 30px;
  }
  .name {
    width: 749px;
  }
  .path {
    color: #d2d2d2;
  }
  .selected {
    background: #777;
  }

  .scroll {
    display: flex;
    flex-direction: column;
    align-items: center;
    flex: none;
    width: 19px;
    padding: 7px 0;
    box-sizing: border-box;
    background: #171717;
  }
  .thumb-bar {
    flex: 818;
    width: 18px;
    margin-top: 6px;
    background: #4d4d4d;
  }
  .track {
    flex: 43;
  }

  footer {
    display: flex;
    align-items: center;
    flex: none;
    box-sizing: border-box;
    height: 30px;
    padding: 0 8px 0 17px;
    border-bottom: 1px solid #eee;
    background: #333;
    color: #ddd;
    font-size: 14px;
    line-height: 20px;
  }
  footer b {
    width: 1px;
    height: 13px;
    margin: 0 12px;
    background: #fff;
  }
  .size {
    margin-left: 10px;
  }
  .views {
    display: flex;
    align-items: center;
    gap: 10px;
    margin-left: auto;
  }

  .menu {
    position: absolute;
    top: 159px;
    left: 321px;
    box-sizing: border-box;
    width: 719px;
    padding: 6px 12px 4px;
    border: 1px solid #a0a0a0;
    background: #2b2b2b;
    box-shadow: 5px 5px 4px rgba(0, 0, 0, 0.5);
    font-size: 24px;
    line-height: 36px;
    white-space: nowrap;
  }
  .menu-group + .menu-group {
    margin-top: 3px;
    padding-top: 5px;
    border-top: 1px solid #808080;
  }
  .menu button {
    display: grid;
    grid-template-columns: 30px 1fr auto;
    align-items: center;
    width: 100%;
    height: 36px;
    text-align: left;
  }
  .menu-label {
    grid-area: 1 / 2;
  }
  .menu-icon {
    grid-area: 1 / 1;
    z-index: 1;
  }
  .sub {
    grid-area: 1 / 3;
  }
  .bold {
    font-weight: 700;
  }
</style>
